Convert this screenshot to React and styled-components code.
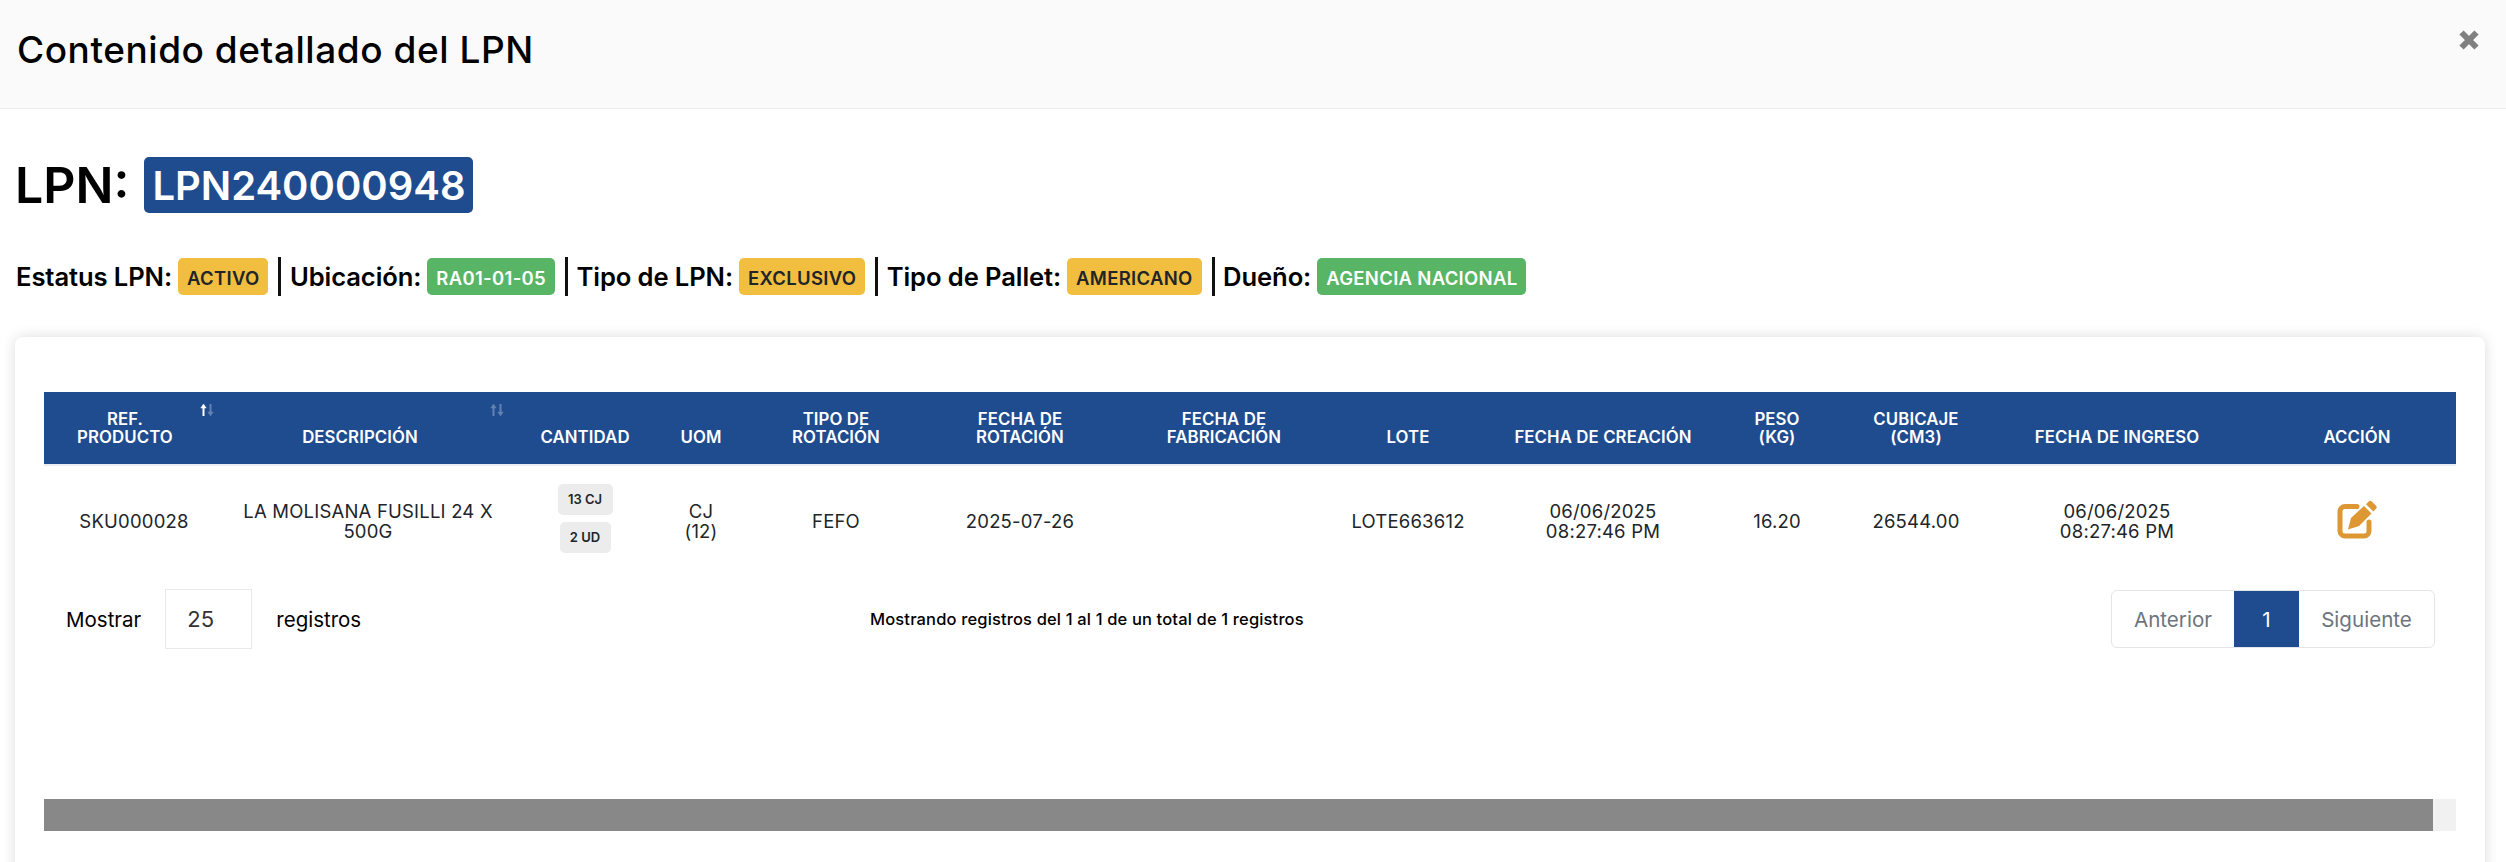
import React from 'react'
import styled, { createGlobalStyle } from 'styled-components'

const blue = '#1f4c8f'

const GlobalStyle = createGlobalStyle`
  html, body {
    margin: 0;
    height: 100%;
    background: #fff;
    overflow: hidden;
  }
  body, button, select {
    font-family: Inter, Lato, Arial, sans-serif;
    color: #000;
  }
`

const Page = styled.div`
  width: 2506px;
  height: 862px;
  overflow: hidden;
`

const ModalHeader = styled.header`
  height: 108px;
  box-sizing: content-box;
  padding: 0 27px 0 17px;
  display: flex;
  align-items: center;
  justify-content: space-between;
  background: #fafafa;
  border-bottom: 1px solid #eceded;
`

const Title = styled.h1`
  margin: 0 0 9px;
  font-size: 37px;
  font-weight: 500;
  letter-spacing: 0.55px;
  line-height: 1;
`

const CloseButton = styled.button`
  display: flex;
  padding: 0;
  margin-bottom: 28px;
  border: 0;
  background: none;
  color: #808080;
`

const ModalBody = styled.main`
  padding: 48px 21px 0 15px;
`

const LpnHeading = styled.div`
  display: flex;
  align-items: center;
  height: 56px;
  gap: 15px;
  font-size: 50px;
  font-weight: 600;
`

const LpnPill = styled.span`
  height: 56px;
  width: 329px;
  display: flex;
  align-items: center;
  justify-content: center;
  background: ${blue};
  color: #fff;
  border-radius: 5px;
  font-size: 40px;
  font-weight: 600;
`

const StatusRow = styled.div`
  display: flex;
  align-items: center;
  height: 38px;
  margin: 44px 0 0 1px;
`

const StatusLabel = styled.span`
  font-size: 25.6px;
  font-weight: 600;
  letter-spacing: -0.1px;
  margin-right: 6px;
`

const Tag = styled.span`
  height: 37px;
  box-sizing: border-box;
  padding: 3px 9px 0;
  display: flex;
  align-items: center;
  border-radius: 5px;
  font-size: 18.5px;
  font-weight: 600;
  letter-spacing: 0.3px;
  white-space: nowrap;
  background: ${(p) => (p.$tone === 'green' ? '#57b565' : '#f1be40')};
  color: ${(p) => (p.$tone === 'green' ? '#fff' : '#212529')};
`

const Divider = styled.span`
  width: 3px;
  height: 39px;
  background: #111;
  margin: 0 8.5px 0 10px;
`

const Card = styled.section`
  margin-top: 42px;
  height: 600px;
  padding: 55px 29px 0;
  background: #fff;
  border-radius: 8px;
  box-shadow: 0 0 14px rgba(0, 0, 0, 0.14);
`

const Table = styled.table`
  width: 2412px;
  table-layout: fixed;
  border-collapse: collapse;
`

const HeadCell = styled.th`
  position: relative;
  height: 54px;
  padding: 0 ${(p) => p.$pr || 0}px 18px ${(p) => p.$pl || 0}px;
  vertical-align: bottom;
  background: ${blue};
  border-bottom: 2px solid #e9ecf2;
  color: #fff;
  font-size: 16.8px;
  font-weight: 600;
  line-height: 18px;
  letter-spacing: 0.1px;
  text-align: center;
  text-transform: uppercase;
`

const SortIcon = styled.svg`
  position: absolute;
  top: 11px;
  right: ${(p) => p.$right}px;
`

const Cell = styled.td`
  box-sizing: border-box;
  height: 105px;
  padding: 5px ${(p) => p.$pr || 0}px 0 ${(p) => p.$pl || 0}px;
  color: #212529;
  font-size: 18.5px;
  line-height: 20px;
  letter-spacing: 0.2px;
  text-align: center;
  vertical-align: middle;
`

const QtyStack = styled.div`
  display: flex;
  flex-direction: column;
  align-items: center;
  gap: 7px;
  margin-top: -5px;
`

const QtyBadge = styled.span`
  width: ${(p) => p.$w}px;
  height: 31px;
  display: flex;
  align-items: center;
  justify-content: center;
  background: #ececec;
  border-radius: 5px;
  font-size: 13px;
  font-weight: 600;
  letter-spacing: 0;
`

const ActionLink = styled.a`
  display: inline-flex;
  color: #dd9733;
  margin-top: 2px;
`

const TableFooter = styled.div`
  display: grid;
  grid-template-columns: 804px auto 1fr;
  align-items: center;
  height: 60px;
  margin-top: 19px;
  padding: 0 21px 0 22px;
`

const LengthControl = styled.div`
  display: flex;
  align-items: center;
  font-size: 20.5px;
`

const LengthSelect = styled.div`
  width: 87px;
  height: 60px;
  box-sizing: border-box;
  margin: 0 24px;
  padding-left: 21px;
  display: flex;
  align-items: center;
  border: 1px solid #e7e9ec;
  font-size: 22px;
  color: #333;
`

const RecordInfo = styled.div`
  font-size: 16.5px;
  font-weight: 500;
  letter-spacing: 0.15px;
`

const Pagination = styled.nav`
  justify-self: end;
  display: flex;
  height: 58px;
  border: 1px solid #e3e5e9;
  border-radius: 6px;
  box-sizing: border-box;
`

const PageButton = styled.span`
  width: ${(p) => p.$w}px;
  display: flex;
  align-items: center;
  justify-content: center;
  font-size: 20.6px;
  color: ${(p) => (p.$active ? '#fff' : '#6c757d')};
  background: ${(p) => (p.$active ? blue : 'transparent')};
`

const ScrollTrack = styled.div`
  height: 32px;
  margin-top: 150px;
  background: #f1f1f1;
`

const ScrollThumb = styled.div`
  height: 100%;
  background: #888;
`

const columns = [180, 288, 146, 86, 184, 184, 224, 144, 246, 102, 176, 226, 226]

const CloseIcon = () => (
  <svg width="20" height="20" viewBox="0 0 20 20">
    <path d="M2.500 2.500 17.500 17.500M17.500 2.500 2.500 17.500" stroke="currentColor" strokeWidth="6" />
  </svg>
)

const EditIcon = () => (
  <svg width="40" height="40" viewBox="0 0 40 40" fill="none">
    <path
      d="M20 6.5H8a5 5 0 0 0-5 5V31a5 5 0 0 0 5 5h19a5 5 0 0 0 5-5v-9"
      stroke="currentColor"
      strokeWidth="5"
      strokeLinecap="round"
    />
    <path d="M11 29.5 14 18 27 6l7.5 7.5-12.500 12.500z" fill="currentColor" />
    <path
      d="M29 4.200 31.500 1.700a2.500 2.500 0 0 1 3.500 0L38.800 5.500a2.500 2.500 0 0 1 0 3.500L36.300 11.500z"
      fill="currentColor"
    />
  </svg>
)

const SortArrows = ({ right, upActive }) => (
  <SortIcon $right={right} width="14" height="14" viewBox="0 0 14 14" fill="none">
    <g opacity={upActive ? 1 : 0.3} stroke="#fff" fill="#fff">
      <path d="M3.500 13V4" strokeWidth="2" />
      <path d="M0.800 5 3.500 1 6.200 5z" strokeWidth="0.5" />
    </g>
    <g opacity="0.3" stroke="#fff" fill="#fff">
      <path d="M10.500 1v9" strokeWidth="2" />
      <path d="M7.800 9 10.500 13 13.200 9z" strokeWidth="0.5" />
    </g>
  </SortIcon>
)

const statusItems = [
  { label: 'Estatus LPN:', value: 'ACTIVO' },
  { label: 'Ubicación:', value: 'RA01-01-05', tone: 'green' },
  { label: 'Tipo de LPN:', value: 'EXCLUSIVO' },
  { label: 'Tipo de Pallet:', value: 'AMERICANO' },
  { label: 'Dueño:', value: 'AGENCIA NACIONAL', tone: 'green' },
]

const App = () => {
  return (
    <Page>
      <GlobalStyle />
      <ModalHeader>
        <Title>Contenido detallado del LPN</Title>
        <CloseButton aria-label="Cerrar">
          <CloseIcon />
        </CloseButton>
      </ModalHeader>
      <ModalBody>
        <LpnHeading>
          LPN:
          <LpnPill>LPN240000948</LpnPill>
        </LpnHeading>
        <StatusRow>
          {statusItems.map((item, i) => (
            <React.Fragment key={item.label}>
              {i > 0 && <Divider />}
              <StatusLabel>{item.label}</StatusLabel>
              <Tag $tone={item.tone}>{item.value}</Tag>
            </React.Fragment>
          ))}
        </StatusRow>
        <Card>
          <Table>
            <colgroup>
              {columns.map((w, i) => (
                <col key={i} width={w} />
              ))}
            </colgroup>
            <thead>
              <tr>
                <HeadCell $pr={18}>
                  Ref.<br />Producto
                  <SortArrows right={10} upActive />
                </HeadCell>
                <HeadCell $pr={16}>
                  Descripción
                  <SortArrows right={8} />
                </HeadCell>
                <HeadCell>Cantidad</HeadCell>
                <HeadCell>UOM</HeadCell>
                <HeadCell>Tipo de<br />rotación</HeadCell>
                <HeadCell>Fecha de<br />rotación</HeadCell>
                <HeadCell>Fecha de<br />fabricación</HeadCell>
                <HeadCell>Lote</HeadCell>
                <HeadCell>Fecha de creación</HeadCell>
                <HeadCell>Peso<br />(KG)</HeadCell>
                <HeadCell>Cubicaje<br />(CM3)</HeadCell>
                <HeadCell>Fecha de ingreso</HeadCell>
                <HeadCell $pl={28}>Acción</HeadCell>
              </tr>
            </thead>
            <tbody>
              <tr>
                <Cell>SKU000028</Cell>
                <Cell>LA MOLISANA FUSILLI 24 X<br />500G</Cell>
                <Cell>
                  <QtyStack>
                    <QtyBadge $w={55}>13 CJ</QtyBadge>
                    <QtyBadge $w={51}>2 UD</QtyBadge>
                  </QtyStack>
                </Cell>
                <Cell>CJ<br />(12)</Cell>
                <Cell>FEFO</Cell>
                <Cell>2025-07-26</Cell>
                <Cell />
                <Cell>LOTE663612</Cell>
                <Cell>06/06/2025<br />08:27:46 PM</Cell>
                <Cell>16.20</Cell>
                <Cell>26544.00</Cell>
                <Cell>06/06/2025<br />08:27:46 PM</Cell>
                <Cell $pl={28}>
                  <ActionLink><EditIcon /></ActionLink>
                </Cell>
              </tr>
            </tbody>
          </Table>
          <TableFooter>
            <LengthControl>
              Mostrar
              <LengthSelect>25</LengthSelect>
              registros
            </LengthControl>
            <RecordInfo>Mostrando registros del 1 al 1 de un total de 1 registros</RecordInfo>
            <Pagination>
              <PageButton $w={122}>Anterior</PageButton>
              <PageButton $w={65} $active>1</PageButton>
              <PageButton $w={135}>Siguiente</PageButton>
            </Pagination>
          </TableFooter>
          <ScrollTrack>
            <ScrollThumb style={{ width: `${(2389 / 2412) * 100}%` }} />
          </ScrollTrack>
        </Card>
      </ModalBody>
    </Page>
  )
}

export default App
